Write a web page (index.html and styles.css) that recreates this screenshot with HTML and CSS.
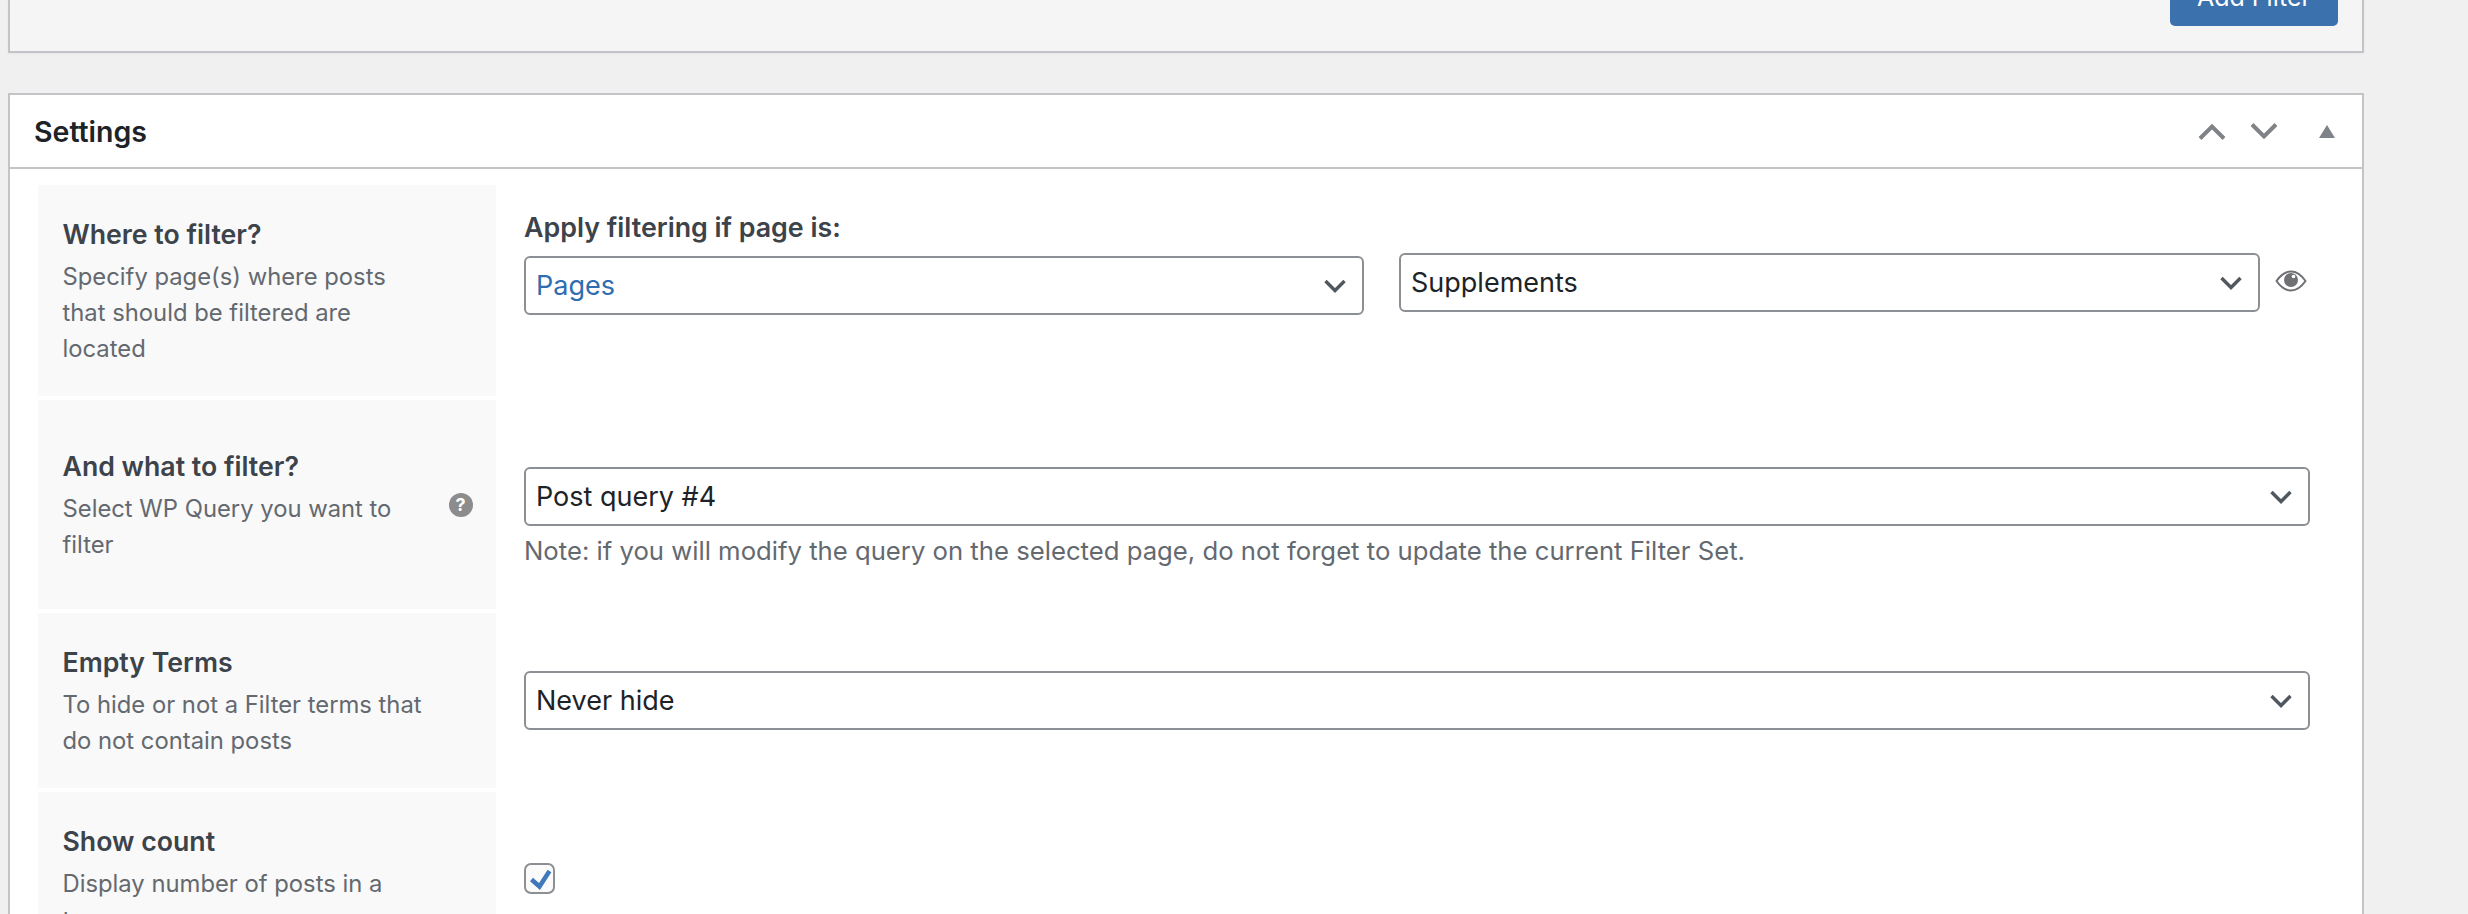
FILE: index.html
```html
<!DOCTYPE html>
<html lang="en">
<head>
<meta charset="utf-8">
<title>Settings</title>
<link rel="stylesheet" href="styles.css">
</head>
<body>
<div class="page">
  <section class="filters">
    <button class="add-filter" type="button">Add Filter</button>
  </section>
  <section class="postbox">
    <header class="postbox-head">
      <h2>Settings</h2>
      <div class="handles">
        <svg class="h-icon" width="30" height="20" viewBox="0 0 30 20"><path d="M3 17.500 15 5.500l12 12" fill="none" stroke="#7f8286" stroke-width="4"/></svg>
        <svg class="h-icon" width="30" height="20" viewBox="0 0 30 20"><path d="M3 3.500l12 12 12-12" fill="none" stroke="#7f8286" stroke-width="4"/></svg>
        <svg class="h-tri" width="16" height="13" viewBox="0 0 16 13"><path d="M8 0l8 13H0z" fill="#7f8286"/></svg>
      </div>
    </header>
    <div class="rows">
      <div class="row row-where">
        <div class="label-cell">
          <div class="label-text">
            <h3>Where to filter?</h3>
            <p>Specify page(s) where posts that should be filtered are located</p>
          </div>
        </div>
        <div class="field-cell field-where">
          <div class="apply-title">Apply filtering if page is:</div>
          <div class="where-selects">
            <div class="select select-pages"><span class="val-link">Pages</span><svg class="chev" width="22" height="14" viewBox="0 0 22 14"><path d="M1.500 2 11 11.500 20.500 2" fill="none" stroke="#50575e" stroke-width="3.400"/></svg></div>
            <div class="select select-page"><span>Supplements</span><svg class="chev" width="22" height="14" viewBox="0 0 22 14"><path d="M1.500 2 11 11.500 20.500 2" fill="none" stroke="#50575e" stroke-width="3.400"/></svg></div>
            <svg class="eye" width="32" height="22" viewBox="0 0 32 22"><path d="M1.500 11C6 4.500 10.500 1.500 16 1.500S26 4.500 30.500 11C26 17.500 21.500 20.500 16 20.500S6 17.500 1.500 11z" fill="none" stroke="#6f7175" stroke-width="2"/><circle cx="16" cy="10" r="7" fill="#6f7175"/><circle cx="18.500" cy="6.500" r="1.800" fill="#fff"/></svg>
          </div>
        </div>
      </div>
      <div class="row row-what">
        <div class="label-cell">
          <div class="label-text">
            <h3>And what to filter?</h3>
            <p>Select WP Query you want to filter</p>
          </div>
          <span class="help">?</span>
        </div>
        <div class="field-cell field-what">
          <div class="select"><span>Post query #4</span><svg class="chev" width="22" height="14" viewBox="0 0 22 14"><path d="M1.500 2 11 11.500 20.500 2" fill="none" stroke="#50575e" stroke-width="3.400"/></svg></div>
          <p class="note">Note: if you will modify the query on the selected page, do not forget to update the current Filter Set.</p>
        </div>
      </div>
      <div class="row row-empty">
        <div class="label-cell">
          <div class="label-text">
            <h3>Empty Terms</h3>
            <p>To hide or not a Filter terms that do not contain posts</p>
          </div>
        </div>
        <div class="field-cell">
          <div class="select"><span>Never hide</span><svg class="chev" width="22" height="14" viewBox="0 0 22 14"><path d="M1.500 2 11 11.500 20.500 2" fill="none" stroke="#50575e" stroke-width="3.400"/></svg></div>
        </div>
      </div>
      <div class="row row-count">
        <div class="label-cell">
          <div class="label-text">
            <h3>Show count</h3>
            <p>Display number of posts in a term</p>
          </div>
        </div>
        <div class="field-cell">
          <span class="check"><svg width="24" height="24" viewBox="0 0 24 24"><path d="M3.500 12.500l8 7 10-15.500" fill="none" stroke="#3f78bb" stroke-width="4.500"/></svg></span>
        </div>
      </div>
    </div>
  </section>
</div>
</body>
</html>
```
FILE: styles.css
```css
* { box-sizing: border-box; }
html, body { margin: 0; padding: 0; height: 914px; overflow: hidden; }
body { background: #f0f0f1; font-family: Inter, "Noto Sans", sans-serif; color: #50575e; }
.page { width: 2356px; margin-left: 8px; }
.filters {
  height: 53px; background: #f5f5f5; border: 2px solid #c3c4c7; border-top: 0;
  display: flex; justify-content: flex-end; align-items: flex-end; padding: 0 24px 25px 0;
  box-shadow: 0 1px 2px rgba(0,0,0,.04);
}
.add-filter {
  width: 168px; height: 58px; flex: none; background: #3b71ad; color: #fff; border: 0; border-radius: 5px;
  font: 400 25px Inter, sans-serif;
}
.postbox { margin-top: 40px; background: #fff; border: 2px solid #c3c4c7; height: 900px; }
.postbox-head {
  height: 74px; border-bottom: 2px solid #c3c4c7; display: flex; align-items: center; justify-content: space-between;
  padding: 0 29px 0 24px;
}
.postbox-head h2 { margin: 0; font-size: 28.500px; font-weight: 600; color: #1d2327; }
.handles { display: flex; align-items: center; }
.h-icon { margin-right: 22px; }
.h-tri { margin-left: 18px; margin-right: -2px; }
.rows { padding: 16px 0 0 28px; }
.row { display: flex; margin-bottom: 4px; }
.row-where { height: 211px; }
.row-what { height: 209px; }
.row-empty { height: 175px; }
.row-count { height: 300px; }
.label-cell { width: 458px; flex: none; background: #f9f9f9; padding: 0 25px 0 24.500px; display: flex; align-items: center; }
.row-count .label-cell { align-items: flex-start; padding-top: 30px; }
.label-text { width: 366px; flex: none; padding-top: 4px; }
.label-text h3 { margin: 0 0 10px; font-size: 26.700px; line-height: 30px; font-weight: 600; color: #3c434a; }
.label-text p { margin: 0; font-size: 23.800px; line-height: 36px; color: #646970; }
.help { width: 24px; height: 24px; border-radius: 50%; background: #8c8c8c; color: #fff; font-size: 18px; font-weight: 700; display: flex; align-items: center; justify-content: center; margin-left: 20px; flex: none; }
.field-cell { flex: 1; padding: 0 52px 0 28px; display: flex; flex-direction: column; justify-content: center; min-width: 0; }
.select {
  height: 59px; border: 2px solid #8c8f94; border-radius: 6px; background: #fff; display: flex; align-items: center;
  justify-content: space-between; padding: 0 16px 0 10px; font-size: 27px; color: #1d2327; flex: none;
}
.val-link { color: #2f6cb0; }
.chev { flex: none; }
.note { margin: 7px 0 0; font-size: 25.700px; line-height: 36px; color: #646970; }
.field-what { justify-content: flex-start; padding-top: 67px; }
.field-where { justify-content: flex-start; padding-right: 0; }
.apply-title { font-size: 26.800px; font-weight: 600; color: #3c434a; line-height: 30px; margin: 27px 0 14px; }
.where-selects { display: flex; align-items: flex-start; }
.select-pages { width: 840px; flex: none; }
.select-page { width: 861px; flex: none; margin: -3px 0 0 35px; }
.eye { flex: none; margin: 14px 0 0 15px; }
.check { width: 31px; height: 31px; border: 2px solid #8c8f94; border-radius: 7px; display: flex; align-items: center; justify-content: center; background: #fbfbfb; }
.row-count .field-cell { justify-content: flex-start; padding-top: 71px; }
```
